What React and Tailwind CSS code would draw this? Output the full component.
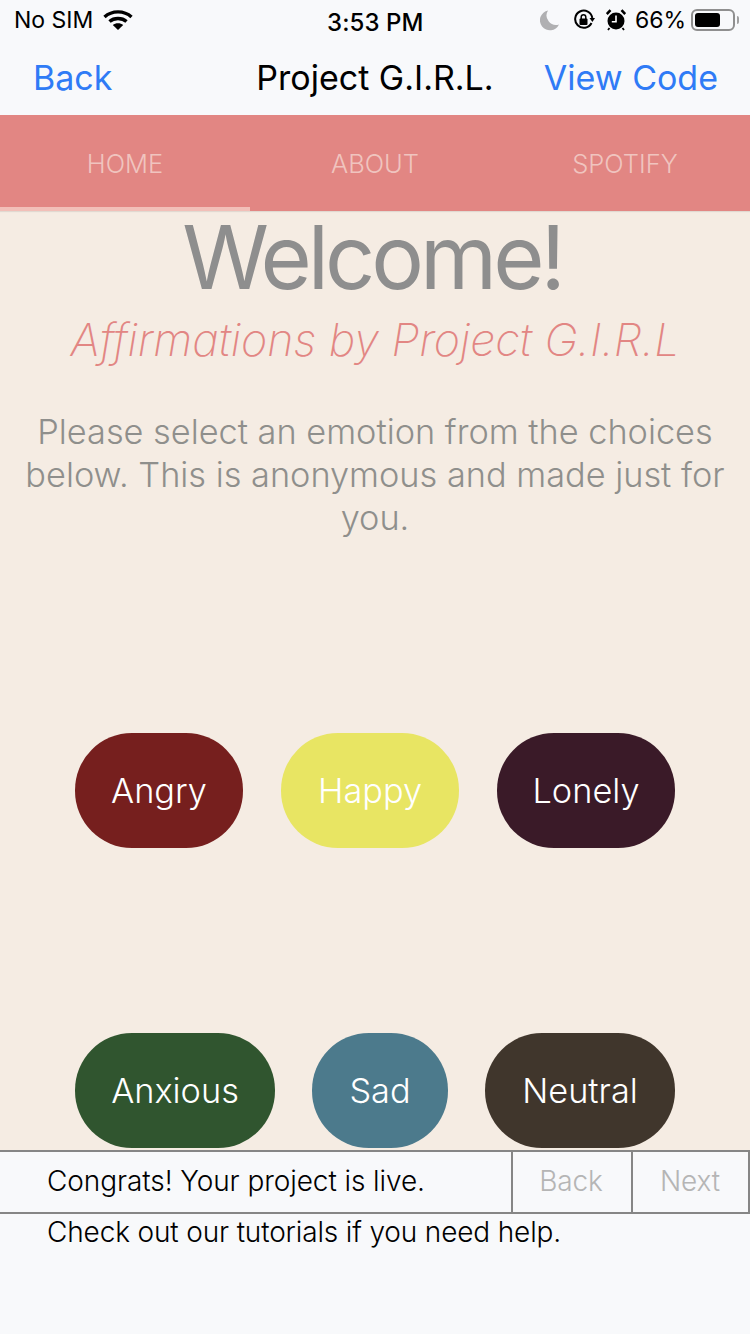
const Pill = ({ w, bg, children }) => (
  <div className={`${w} ${bg} h-[115px] pt-[1px] rounded-[57px] flex items-center justify-center text-white text-[34.3px] font-light`}>{children}</div>
);

export default function App() {
  return (
    <div className="w-[750px] h-[1334px] overflow-hidden bg-[#f8f9fb] flex flex-col font-['Inter','Noto_Sans',sans-serif] text-black">
      <div className="h-[40px] shrink-0 relative flex items-center justify-between pl-[14px] pr-[11px] text-[23px]">
        <div className="flex items-center gap-[10px]">
          <span>No SIM</span>
          <svg width="30" height="22" viewBox="0 0 30 22" fill="none" stroke="#000" strokeWidth="3.4">
            <path d="M1.5 8 C9 1.2 21 1.2 28.5 8" />
            <path d="M6.5 12.5 C11 8.5 19 8.5 23.5 12.5" />
            <path d="M15 21 L9.8 16 C12.5 13.5 17.5 13.5 20.2 16 Z" fill="#000" stroke="none" />
          </svg>
        </div>
        <span className="absolute left-[327px] top-[5px] text-[24px] font-medium tracking-[0.1px]">3:53 PM</span>
        <div className="flex items-center">
          <svg width="20" height="22" viewBox="0 0 20 22" className="mr-[13px]">
            <path d="M8 1.5 A10 10 0 1 0 19 15.5 A9.5 9.5 0 0 1 8 1.5 Z" fill="#b0b0b2" />
          </svg>
          <svg width="22" height="22" viewBox="0 0 22 22" fill="none" className="mr-[11px]">
            <path d="M18.5 14 A8.6 8.6 0 1 1 19.3 9" stroke="#000" strokeWidth="2" />
            <path d="M16.5 9 L22 9 L19.4 13 Z" fill="#000" />
            <rect x="6.5" y="9.5" width="8" height="6.5" rx="1" fill="#000" />
            <path d="M8.2 10 V8 A2.3 2.3 0 0 1 12.8 8 V10" stroke="#000" strokeWidth="1.5" />
          </svg>
          <svg width="20" height="22" viewBox="0 0 20 22" fill="none" className="mr-[9px]">
            <circle cx="10" cy="12" r="8.5" fill="#000" />
            <path d="M0.8 5 L4.5 1.2 M15.5 1.2 L19.2 5" stroke="#000" strokeWidth="2.6" />
            <path d="M3.5 19 L2 21 M16.5 19 L18 21" stroke="#000" strokeWidth="1.8" />
            <path d="M10 6.5 V12.8 H5.8" stroke="#fff" strokeWidth="1.6" />
          </svg>
          <span className="mr-[5px]">66%</span>
          <div className="w-[44px] h-[22px] rounded-[6px] border-2 border-[#8f8f8f] p-[2px] relative mr-[4px]">
            <div className="w-[25px] h-full rounded-[3px] bg-black" />
            <div className="absolute right-[-6px] top-[5px] w-[2px] h-[8px] bg-[#a0a0a0] rounded-r-[2px]" />
          </div>
        </div>
      </div>

      <div className="h-[75px] shrink-0 relative flex items-center justify-between pl-[33px] pr-[32px] text-[34px]">
        <span className="text-[#2f7bf6]">Back</span>
        <span className="absolute left-0 right-0 text-center">Project G.I.R.L.</span>
        <span className="text-[#2f7bf6]">View Code</span>
      </div>

      <div className="h-[96px] shrink-0 bg-[#e28683] flex relative z-10 shadow-[0_1px_1px_rgba(0,0,0,0.08)] text-[25.5px] font-light text-[#f0c4bf]">
        <div className="w-[250px] flex justify-center pt-[30px]">HOME</div>
        <div className="w-[250px] flex justify-center pt-[30px]">ABOUT</div>
        <div className="w-[250px] flex justify-center pt-[30px]">SPOTIFY</div>
        <div className="absolute left-0 bottom-0 w-[250px] h-[4px] bg-[#f2bfb8]" />
      </div>

      <div className="h-[939px] shrink-0 bg-[#f5ece3] flex flex-col items-center">
        <div className="mr-[6px] text-[88px] leading-[92px] tracking-[-4px] text-[#8e8e8e]">Welcome!</div>
        <div className="mt-[10px] text-[44.8px] leading-[54px] italic font-extralight text-[#e28683]">Affirmations by Project G.I.R.L</div>
        <div className="mt-[43px] w-[720px] text-center text-[34.3px] leading-[43px] font-light text-[#8f8f8c]">
          Please select an emotion from the choices below. This is anonymous and made just for you.
        </div>
        <div className="mt-[194px] flex gap-[38px]">
          <Pill w="w-[168px]" bg="bg-[#761f1e]">Angry</Pill>
          <Pill w="w-[178px]" bg="bg-[#e8e563]">Happy</Pill>
          <Pill w="w-[178px]" bg="bg-[#3a1a28]">Lonely</Pill>
        </div>
        <div className="mt-[185px] flex gap-[37px]">
          <Pill w="w-[200px]" bg="bg-[#30552f]">Anxious</Pill>
          <Pill w="w-[136px]" bg="bg-[#4c7a8c]">Sad</Pill>
          <Pill w="w-[190px]" bg="bg-[#40362c]">Neutral</Pill>
        </div>
      </div>

      <div className="h-[64px] shrink-0 border-y-2 border-[#868686] flex text-[28px] tracking-[-0.08px] font-light">
        <div className="flex-1 pl-[47px] pb-[2px] flex items-center">Congrats! Your project is live.</div>
        <div className="w-[120px] pb-[2px] pr-[2px] border-l-2 border-[#868686] flex items-center justify-center text-[#b5b5b5]">Back</div>
        <div className="w-[119px] pb-[2px] pr-[1px] border-x-2 border-[#868686] flex items-center justify-center text-[#b5b5b5]">Next</div>
      </div>
      <div className="pl-[47px] mt-[-3px] text-[28px] tracking-[-0.15px] font-light">Check out our tutorials if you need help.</div>
    </div>
  );
}
